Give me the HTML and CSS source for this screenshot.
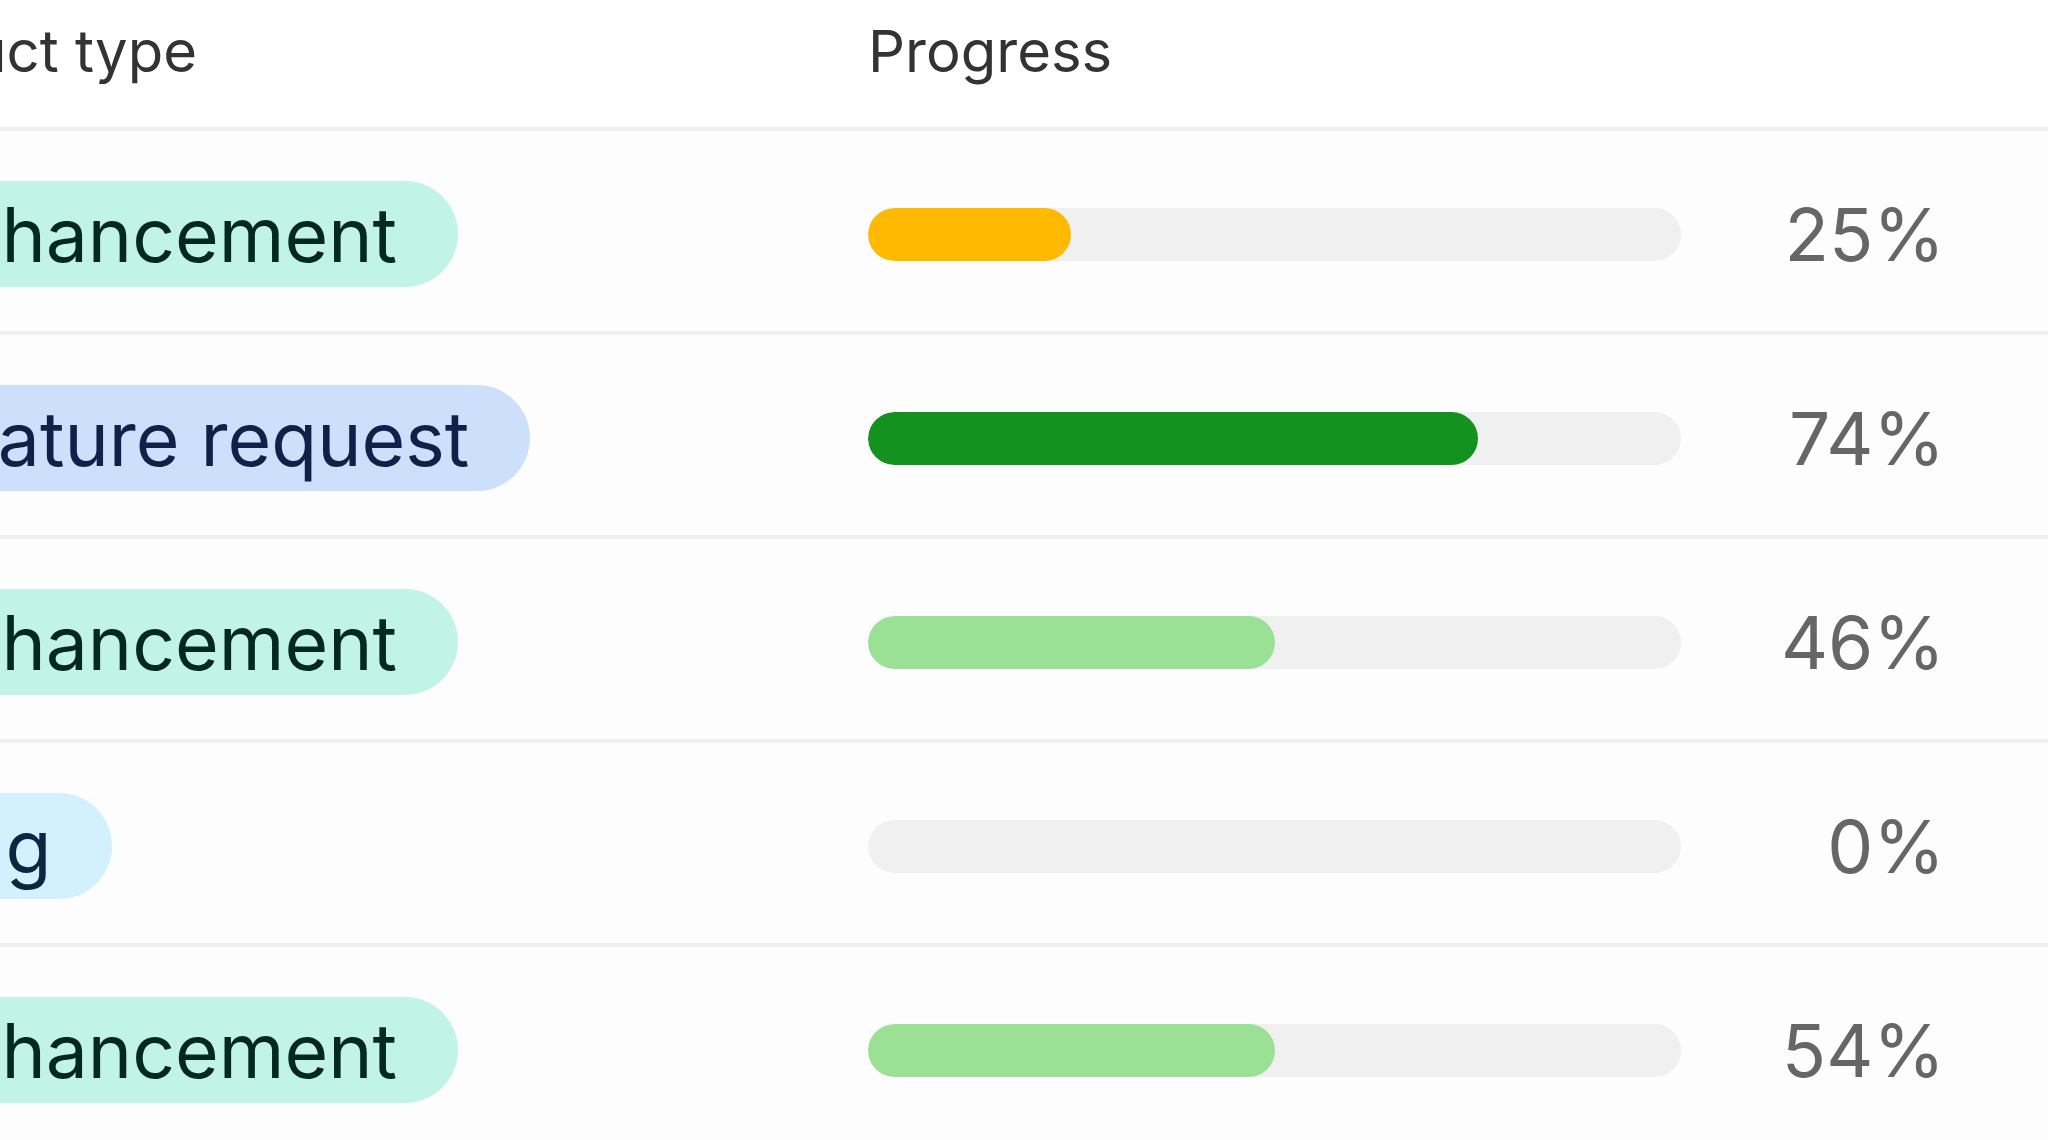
FILE: index.html
```html
<!DOCTYPE html>
<html lang="en">

<head>
	<meta charset="UTF-8">
	<meta name="viewport" content="width=device-width, initial-scale=1.0">
	<title>Issues progress</title>
	<link rel="stylesheet" href="styles.css">
</head>

<body>
	<div class="issue-table">
		<div class="issue-row issue-row--head">
			<div class="cell cell--type">Product type</div>
			<div class="cell">Progress</div>
			<div class="cell"></div>
		</div>

		<div class="issue-row">
			<div class="cell"><span class="tag tag--enhancement">Enhancement</span></div>
			<div class="cell">
				<div class="track"><div class="fill fill--low" style="width: 25%"></div></div>
			</div>
			<div class="cell percent">25%</div>
		</div>

		<div class="issue-row">
			<div class="cell"><span class="tag tag--feature">Feature request</span></div>
			<div class="cell">
				<div class="track"><div class="fill fill--high" style="width: 75%"></div></div>
			</div>
			<div class="cell percent">74%</div>
		</div>

		<div class="issue-row">
			<div class="cell"><span class="tag tag--enhancement">Enhancement</span></div>
			<div class="cell">
				<div class="track"><div class="fill fill--mid" style="width: 50%"></div></div>
			</div>
			<div class="cell percent">46%</div>
		</div>

		<div class="issue-row">
			<div class="cell"><span class="tag tag--bug">Bug</span></div>
			<div class="cell">
				<div class="track"></div>
			</div>
			<div class="cell percent">0%</div>
		</div>

		<div class="issue-row">
			<div class="cell"><span class="tag tag--enhancement">Enhancement</span></div>
			<div class="cell">
				<div class="track"><div class="fill fill--mid" style="width: 50%"></div></div>
			</div>
			<div class="cell percent">54%</div>
		</div>
	</div>
</body>

</html>
```

FILE: styles.css
```css
body {
	margin: 0;
	padding: 0;
	background-color: #fdfdfd;
	font-family: Inter, 'Noto Sans', sans-serif;
	overflow: hidden;
}

.issue-table {
	margin-left: -150px;
}

.issue-row {
	display: grid;
	grid-template-columns: 1018px 813px 264px 1fr;
	align-items: center;
	box-sizing: border-box;
	height: 204px;
	padding-top: 6px;
	border-bottom: 4px solid #efefef;
}

.issue-row--head {
	height: 131px;
	padding-top: 0;
	align-items: start;
	background-color: #fff;
	color: #333;
	font-size: 58px;
}

.issue-row--head .cell {
	padding-top: 16px;
	line-height: 1.21;
}

.issue-row--head .cell--type {
	margin-left: -6px;
}

.tag {
	display: inline-flex;
	align-items: center;
	height: 106px;
	padding: 0 61px 0 62px;
	border-radius: 53px;
	font-size: 75px;
	white-space: nowrap;
}

.tag--enhancement {
	background-color: #c1f4e7;
	color: #032820;
}

.tag--feature {
	background-color: #cce0fc;
	color: #0f2148;
}

.tag--bug {
	background-color: #d2f0fd;
	color: #0c2540;
}

.track {
	height: 53px;
	border-radius: 27px;
	background-color: #f0f0f0;
	overflow: hidden;
}

.fill {
	height: 100%;
	border-radius: 27px;
}

.fill--low {
	background-color: #ffba00;
}

.fill--mid {
	background-color: #9ae095;
}

.fill--high {
	background-color: #14921f;
}

.percent {
	text-align: right;
	color: #666;
	font-size: 73px;
}
```
